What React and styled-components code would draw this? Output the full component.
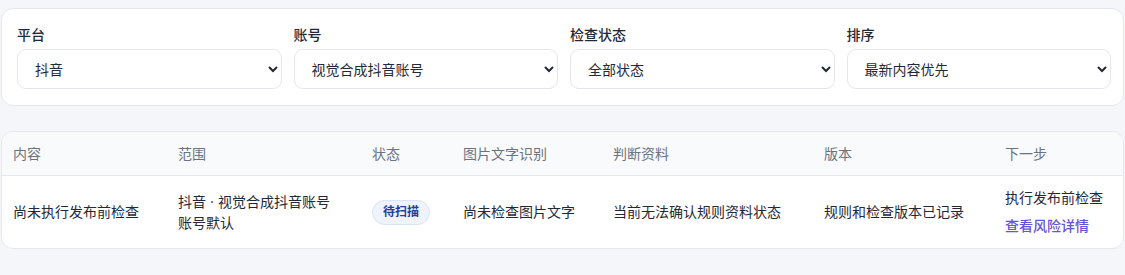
import React from "react"
import styled, { createGlobalStyle } from "styled-components"

const GlobalStyle = createGlobalStyle`
  html, body {
    margin: 0;
    padding: 0;
    background: #f4f6f9;
  }
  body {
    font-family: Inter, "Noto Sans CJK SC", "Noto Sans", sans-serif;
    color: #1f2937;
    -webkit-font-smoothing: antialiased;
  }
`

const Page = styled.div`
  padding: 8px 1px;
  display: flex;
  flex-direction: column;
  gap: 25px;
`

const Card = styled.div`
  background: #fff;
  border: 1px solid #e5e8ee;
  border-radius: 12px;
  overflow: hidden;
`

const Filters = styled(Card)`
  display: grid;
  grid-template-columns: repeat(4, 1fr);
  gap: 12px;
  padding: 16px 12px 16px 15px;
`

const Field = styled.label`
  display: flex;
  flex-direction: column;
  gap: 4px;
  min-width: 0;
`

const FieldLabel = styled.span`
  font-size: 14px;
  line-height: 20px;
  font-weight: 500;
  color: #1f2937;
`

const Select = styled.select`
  height: 40px;
  width: 100%;
  box-sizing: border-box;
  padding: 0 10px 0 13px;
  border: 1px solid #e3e6eb;
  border-radius: 9px;
  background: #fff;
  font-family: inherit;
  font-size: 14px;
  color: #1f2937;
  outline: none;
`

const Table = styled.table`
  width: 100%;
  border-collapse: collapse;
  table-layout: fixed;
  font-size: 14px;
  line-height: 20px;
`

const Th = styled.th`
  text-align: left;
  font-weight: 400;
  color: #6b7280;
  background: #f9fafb;
  padding: 12px 11px 11px;
  border-bottom: 1px solid #e5e8ee;
`

const Td = styled.td`
  padding: 12px 11px;
  vertical-align: middle;
  color: #1f2937;
`

const Line = styled.div`
  line-height: 21px;
`

const Badge = styled.span`
  display: inline-flex;
  align-items: center;
  height: 23px;
  padding: 0 10px;
  border-radius: 999px;
  background: #eef3fc;
  border: 1px solid #dae3f3;
  color: #1e3f9a;
  font-size: 12px;
  font-weight: 600;
`

const Steps = styled.div`
  display: flex;
  flex-direction: column;
  gap: 8px;
`

const Link = styled.a`
  color: #6652d6;
  font-weight: 500;
  text-decoration: none;
  cursor: pointer;
`

const filters = [
  { label: "平台", options: ["抖音"] },
  { label: "账号", options: ["视觉合成抖音账号"] },
  { label: "检查状态", options: ["全部状态"] },
  { label: "排序", options: ["最新内容优先"] },
]

const columns = [
  { title: "内容", width: 165 },
  { title: "范围", width: 194 },
  { title: "状态", width: 91 },
  { title: "图片文字识别", width: 150 },
  { title: "判断资料", width: 211 },
  { title: "版本", width: 181 },
  { title: "下一步" },
]

export default function App() {
  return (
    <>
      <GlobalStyle />
      <Page>
        <Filters>
          {filters.map((f) => (
            <Field key={f.label}>
              <FieldLabel>{f.label}</FieldLabel>
              <Select defaultValue={f.options[0]}>
                {f.options.map((o) => (
                  <option key={o}>{o}</option>
                ))}
              </Select>
            </Field>
          ))}
        </Filters>

        <Card>
          <Table>
            <colgroup>
              {columns.map((c) => (
                <col key={c.title} style={c.width ? { width: c.width } : undefined} />
              ))}
            </colgroup>
            <thead>
              <tr>
                {columns.map((c) => (
                  <Th key={c.title}>{c.title}</Th>
                ))}
              </tr>
            </thead>
            <tbody>
              <tr>
                <Td>尚未执行发布前检查</Td>
                <Td>
                  <Line>抖音 · 视觉合成抖音账号</Line>
                  <Line>账号默认</Line>
                </Td>
                <Td>
                  <Badge>待扫描</Badge>
                </Td>
                <Td>尚未检查图片文字</Td>
                <Td>当前无法确认规则资料状态</Td>
                <Td>规则和检查版本已记录</Td>
                <Td>
                  <Steps>
                    <span>执行发布前检查</span>
                    <Link>查看风险详情</Link>
                  </Steps>
                </Td>
              </tr>
            </tbody>
          </Table>
        </Card>
      </Page>
    </>
  )
}
